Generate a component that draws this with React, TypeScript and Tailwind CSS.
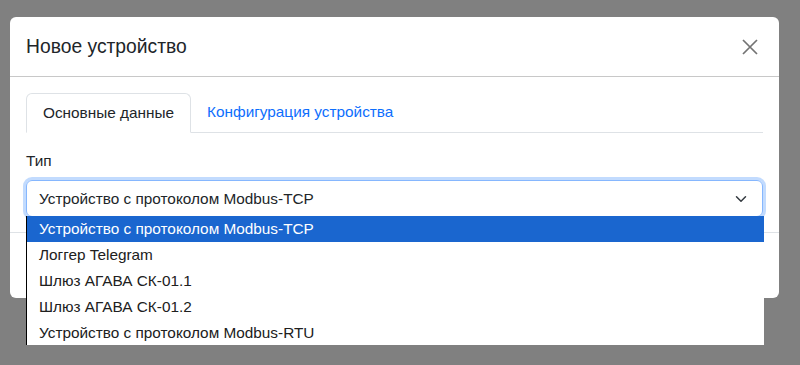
import { useState } from "react";

const deviceTypes = [
  "Устройство с протоколом Modbus-TCP",
  "Логгер Telegram",
  "Шлюз АГАВА СК-01.1",
  "Шлюз АГАВА СК-01.2",
  "Устройство с протоколом Modbus-RTU",
];

const CloseIcon = () => (
  <svg width="16" height="16" viewBox="0 0 16 16" fill="none">
    <path d="M1 1l14 14M15 1L1 15" stroke="#737373" strokeWidth="1.7" />
  </svg>
);

const ChevronIcon = () => (
  <svg width="16" height="12" viewBox="0 0 16 16" fill="none">
    <path
      d="M2 5l6 6 6-6"
      stroke="#343a40"
      strokeWidth="2"
      strokeLinecap="round"
      strokeLinejoin="round"
    />
  </svg>
);

export default function App() {
  const [selected] = useState(0);

  return (
    <div
      className="h-[365px] w-[800px] overflow-hidden bg-[#808080] pl-[10px] pt-[17px] text-[#212529]"
      style={{ fontFamily: '"Liberation Sans", Arial, sans-serif' }}
    >
      <div className="flex w-[769px] flex-col rounded-[6px] bg-white">
        {/* header */}
        <div className="flex h-[60px] items-center justify-between border-b border-[#c8c8c8] px-4">
          <h5 className="text-[19.3px] leading-[30px]">Новое устройство</h5>
          <button type="button" className="mr-[1px] flex h-6 w-6 items-center justify-center">
            <CloseIcon />
          </button>
        </div>

        {/* body */}
        <div className="px-4 pb-[15px] pt-4">
          <div className="flex border-b border-[#dee2e6] text-[15.35px] leading-6">
            <div className="-mb-px rounded-t-[6px] border border-b-white border-[#dee2e6] bg-white px-4 py-[7px]">
              Основные данные
            </div>
            <div className="px-4 py-[7px] text-[#0d6efd]">Конфигурация устройства</div>
          </div>

          <label className="mt-[16px] mb-[7px] block text-[15.35px] leading-6">Тип</label>

          <div className="relative text-[15.35px]">
            <div className="flex h-[37px] items-center justify-between rounded-[6px] border border-[#86b7fe] pl-3 pr-[13px] shadow-[0_0_0_3px_rgba(13,110,253,0.25)]">
              <span>{deviceTypes[selected]}</span>
              <ChevronIcon />
            </div>

            {/* open list of the select */}
            <ul className="absolute left-0 top-[36px] z-10 w-[738px] border-l border-black bg-white">
              {deviceTypes.map((t, i) => (
                <li
                  key={t}
                  className={
                    i === selected
                      ? "flex h-[26px] items-center bg-[#1a66cf] pl-3 text-white"
                      : "flex h-[25.75px] items-center pl-3 text-[#202020]"
                  }
                >
                  {t}
                </li>
              ))}
            </ul>
          </div>
        </div>

        {/* footer */}
        <div className="h-[66px] border-t border-[#dee2e6]" />
      </div>
    </div>
  );
}
